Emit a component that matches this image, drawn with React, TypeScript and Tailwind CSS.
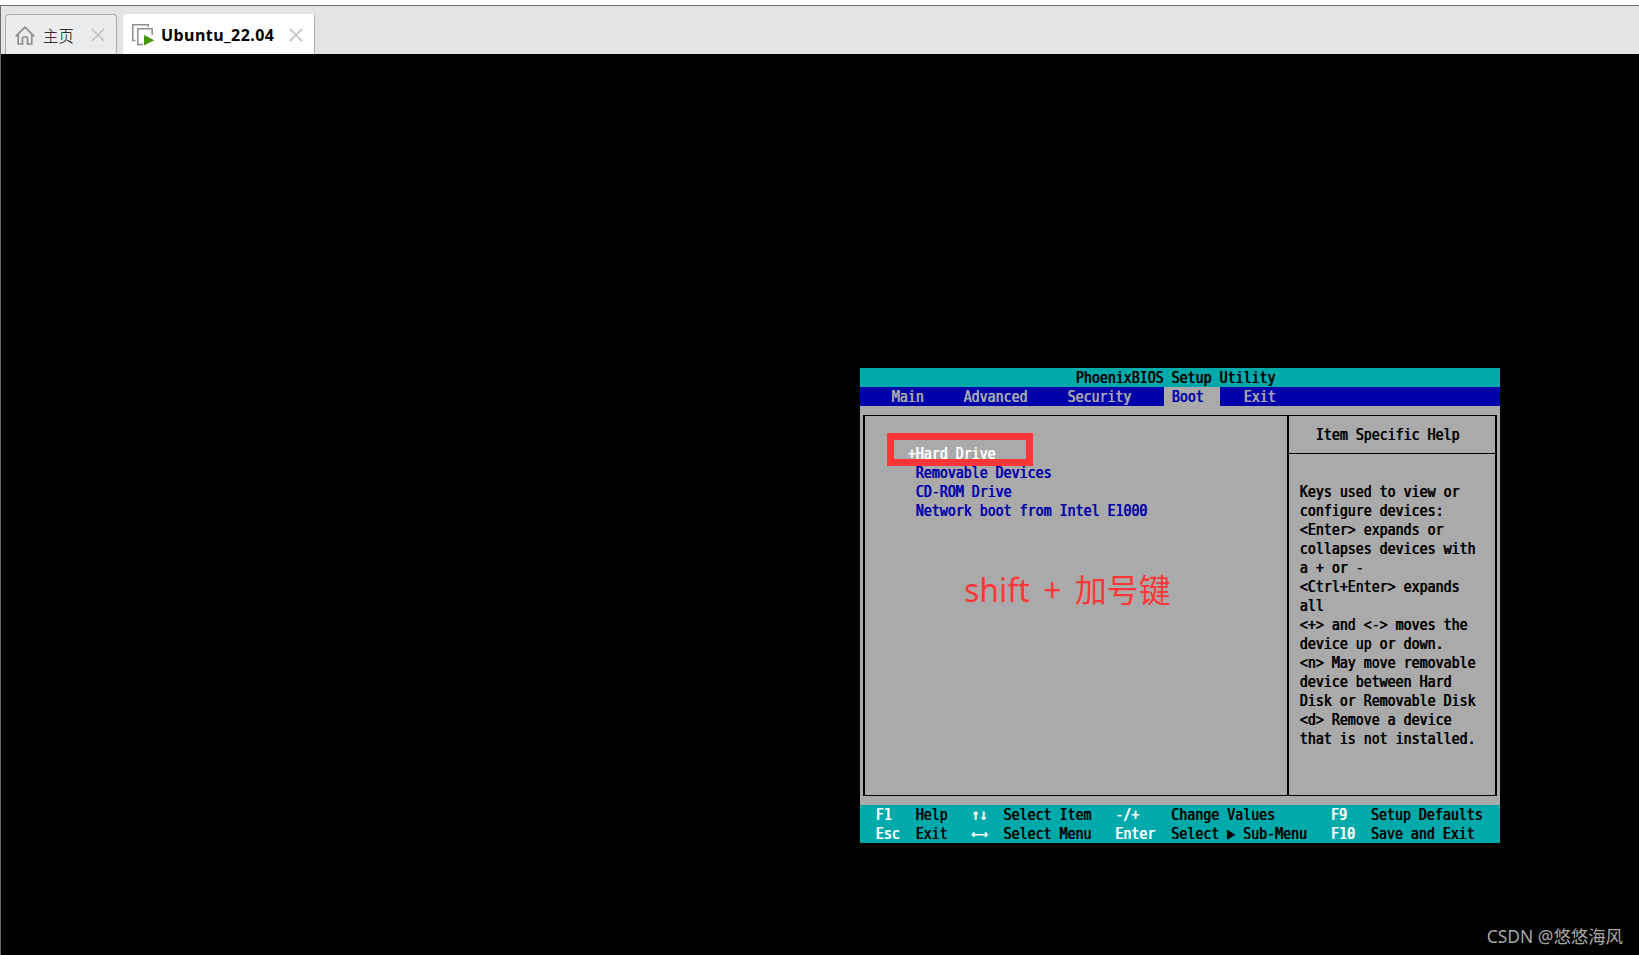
import React from "react";

type Run = { text: string; className?: string };

const ROW =
  "h-[19px] whitespace-pre leading-[19px] [font-family:'DejaVu_Sans_Mono','Liberation_Mono',monospace] text-[13.289px] origin-center scale-y-[1.2] -translate-x-[0.5px] [text-shadow:0.7px_0_0_currentColor]";

function Line({ runs, className = "" }: { runs: Run[]; className?: string }) {
  return (
    <div className={`${ROW} ${className}`}>
      {runs.map((r, i) => (
        <span key={i} className={r.className}>
          {r.text}
        </span>
      ))}
    </div>
  );
}

const HELP = [
  "Keys used to view or",
  "configure devices:",
  "<Enter> expands or",
  "collapses devices with",
  "a + or -",
  "<Ctrl+Enter> expands",
  "all",
  "<+> and <-> moves the",
  "device up or down.",
  "<n> May move removable",
  "device between Hard",
  "Disk or Removable Disk",
  "<d> Remove a device",
  "that is not installed.",
];

const DEVICES = ["Removable Devices", "CD-ROM Drive", "Network boot from Intel E1000"];

function CloseIcon() {
  return (
    <svg width="14" height="14" viewBox="0 0 14 14" fill="none" stroke="#c6c6c6" strokeWidth="1.9">
      <path d="M0.8 0.8 13.2 13.2M13.2 0.8 0.8 13.2" />
    </svg>
  );
}

function HomeIcon() {
  return (
    <svg width="20" height="19" viewBox="0 0 20 19" fill="none" stroke="#8e8e8e" strokeWidth="1.7">
      <path d="M0.7 10.4 10 1.2 19.3 10.4M3.2 8.6V18H7.5V12Q7.5 11 8.5 11H11.5Q12.5 11 12.5 12V18H16.8V8.6" />
    </svg>
  );
}

function MachineIcon() {
  return (
    <svg width="23" height="22" viewBox="0 0 23 22" fill="none">
      <path d="M3.5 16.5H0.8V0.8H16.2V3" stroke="#8e8e8e" strokeWidth="1.5" />
      <path d="M11 20.5H5.8V4.8H20.2V11" stroke="#8e8e8e" strokeWidth="1.5" />
      <path d="M12 11V21.5L22.3 16.2Z" fill="#44960c" />
    </svg>
  );
}

export default function App() {
  return (
    <div className="flex h-[955px] w-[1639px] flex-col overflow-hidden bg-white pt-[5px]">
      <div className="flex min-h-0 flex-1 flex-col border-l border-t border-[#6b6b6e] bg-[#e3e4e6]">
        <header className="flex h-[48px] shrink-0 items-end gap-[6px] pl-1">
          <div className="flex h-[40px] w-[112px] items-center rounded-t-[4px] border border-b-0 border-[#adadad] bg-[#ebecee] pl-[9px] pt-[1px]">
            <HomeIcon />
            <span className="ml-[8px] w-[48px] whitespace-nowrap text-[15.4px] font-light leading-5 text-black [font-family:'Noto_Sans_CJK_SC',sans-serif]">
              主页
            </span>
            <CloseIcon />
          </div>
          <div className="flex h-[40px] w-[192px] items-center rounded-t-[4px] border border-b-0 border-l-white border-r-[#adadad] border-t-white bg-white pl-[8px]">
            <MachineIcon />
            <span className="ml-[6px] w-[128px] whitespace-nowrap text-[16px] font-bold leading-5 tracking-[0.45px] text-black [font-family:'Noto_Sans','Open_Sans',sans-serif]">
              Ubuntu_22.04
            </span>
            <CloseIcon />
          </div>
        </header>

        <main className="flex flex-1 flex-col items-start bg-black pl-[859px] pt-[314px]">
          <section className="relative flex h-[475px] w-[640px] flex-col bg-[#aaaaaa]">
            <div className="h-[19px] bg-[#00aaaa] pl-[216px] text-black">
              <Line runs={[{ text: "PhoenixBIOS Setup Utility" }]} />
            </div>
            <nav className="flex h-[19px] bg-[#0000aa] text-[#aaaaaa]">
              <Line className="w-[304px] pl-[32px]" runs={[{ text: "Main     Advanced     Security" }]} />
              <div className="w-[56px] bg-[#aaaaaa] pl-[8px] text-[#0000aa]">
                <Line runs={[{ text: "Boot" }]} />
              </div>
              <Line className="pl-[24px]" runs={[{ text: "Exit" }]} />
            </nav>

            <div className="mx-[3px] mb-[9px] mt-[9px] flex flex-1 border-x-2 border-y border-black">
              <div className="flex-1 pl-[43px] pt-[28px] text-[#0000aa]">
                <Line className="text-white" runs={[{ text: "+Hard Drive" }]} />
                <div className="pl-[8px]">
                  {DEVICES.map((d) => (
                    <Line key={d} runs={[{ text: d }]} />
                  ))}
                </div>
                <p className="pl-[56px] pt-[50px] text-[32px] leading-[40px] text-[#fd3737] [font-family:'Noto_Sans','Noto_Sans_CJK_SC',sans-serif] [word-spacing:5px]">
                  shift + 加号键
                </p>
              </div>
              <aside className="flex w-[208px] flex-col border-l-2 border-black text-black">
                <div className="h-[38px] border-b border-black pl-[27px] pt-[9px]">
                  <Line runs={[{ text: "Item Specific Help" }]} />
                </div>
                <div className="pl-[11px] pt-[28px]">
                  {HELP.map((h) => (
                    <Line key={h} runs={[{ text: h }]} />
                  ))}
                </div>
              </aside>
            </div>

            <footer className="h-[38px] bg-[#00aaaa] pl-[16px] text-black">
              <Line
                runs={[
                  { text: "F1   ", className: "text-white" },
                  { text: "Help   " },
                  { text: "↑↓  ", className: "text-white" },
                  { text: "Select Item   " },
                  { text: "-/+    ", className: "text-white" },
                  { text: "Change Values       " },
                  { text: "F9   ", className: "text-white" },
                  { text: "Setup Defaults" },
                ]}
              />
              <Line
                runs={[
                  { text: "Esc  ", className: "text-white" },
                  { text: "Exit   " },
                  { text: "←→  ", className: "text-white" },
                  { text: "Select Menu   " },
                  { text: "Enter  ", className: "text-white" },
                  { text: "Select ▶ Sub-Menu   " },
                  { text: "F10  ", className: "text-white" },
                  { text: "Save and Exit" },
                ]}
              />
            </footer>

            <div className="absolute left-[27px] top-[65px] h-[33px] w-[146px] border-[7px] border-[#fd3737]" />
          </section>
          <p className="mt-auto self-end pb-[7px] pr-[16px] text-[17.4px] leading-[24px] text-[#a8a8a8] [font-family:'Noto_Sans','Noto_Sans_CJK_SC',sans-serif]">
            CSDN @悠悠海风
          </p>
        </main>
      </div>
    </div>
  );
}
